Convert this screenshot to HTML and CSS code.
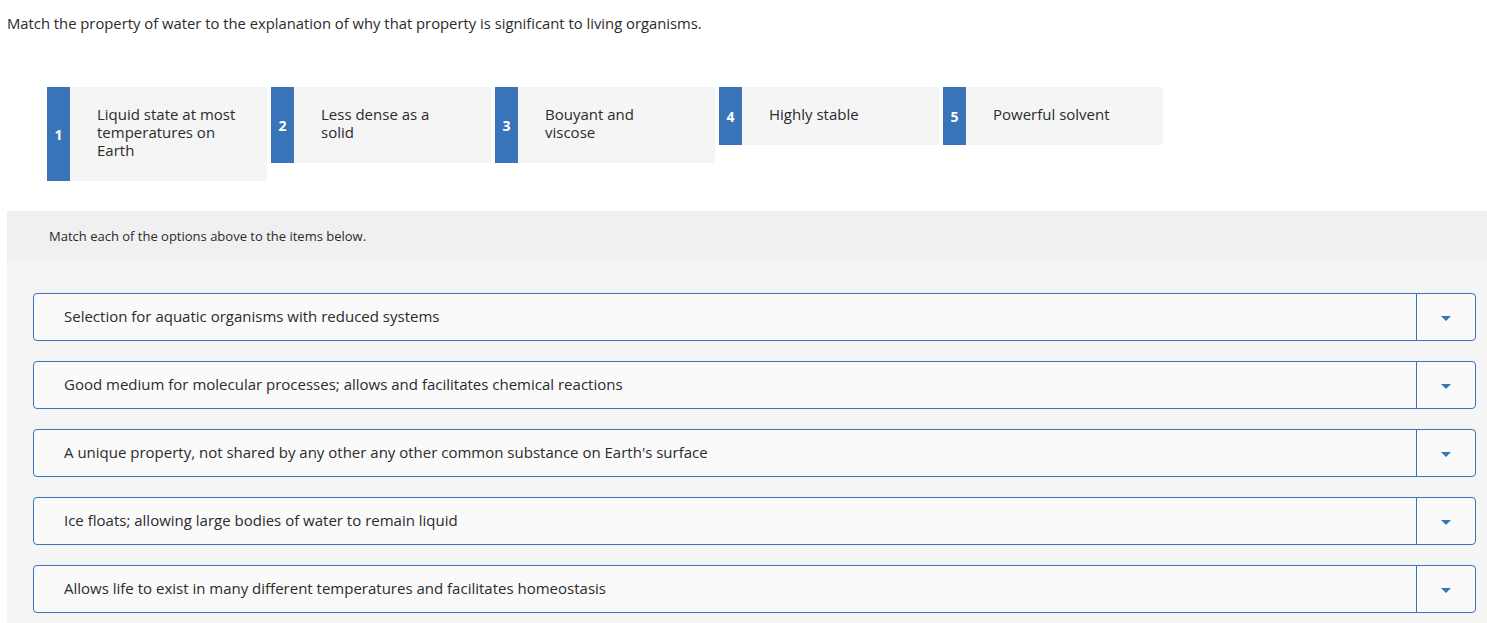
FILE: index.html
```html
<!DOCTYPE html>
<html lang="en">

<head>
    <meta charset="UTF-8" />
    <title>Matching</title>
    <link rel="stylesheet" href="styles.css">
</head>

<body>

    <p class="prompt">Match the property of water to the explanation of why that property is significant to living organisms.</p>

    <div class="choices">
        <div class="choice"><span class="num">1</span><span class="label">Liquid state at most temperatures on Earth</span></div>
        <div class="choice"><span class="num">2</span><span class="label">Less dense as a solid</span></div>
        <div class="choice"><span class="num">3</span><span class="label">Bouyant and viscose</span></div>
        <div class="choice"><span class="num">4</span><span class="label">Highly stable</span></div>
        <div class="choice"><span class="num">5</span><span class="label">Powerful solvent</span></div>
    </div>

    <div class="panel">
        <div class="panel-head">Match each of the options above to the items below.</div>
        <div class="rows">
            <div class="row"><span class="row-text">Selection for aquatic organisms with reduced systems</span><span class="drop"><span class="caret"></span></span></div>
            <div class="row"><span class="row-text">Good medium for molecular processes; allows and facilitates chemical reactions</span><span class="drop"><span class="caret"></span></span></div>
            <div class="row"><span class="row-text">A unique property, not shared by any other any other common substance on Earth's surface</span><span class="drop"><span class="caret"></span></span></div>
            <div class="row"><span class="row-text">Ice floats; allowing large bodies of water to remain liquid</span><span class="drop"><span class="caret"></span></span></div>
            <div class="row"><span class="row-text">Allows life to exist in many different temperatures and facilitates homeostasis</span><span class="drop"><span class="caret"></span></span></div>
        </div>
    </div>

</body>

</html>
```

FILE: styles.css
```css
:root {
    --blue: #3a74b8;
    --text: #2b2b2b;
}

* {
    box-sizing: border-box;
}

body {
    font-family: "Open Sans", Lato, sans-serif;
    margin: 0;
    color: var(--text);
    background: #fff;
}

.prompt {
    margin: 0;
    padding: 14px 7px 0;
    font-size: 14.8px;
    line-height: 18px;
}

.choices {
    display: flex;
    align-items: flex-start;
    gap: 4px;
    padding: 55px 0 0 47px;
}

.choice {
    display: flex;
    width: 220px;
    background: #f5f5f5;
    border-radius: 0 3px 3px 0;
}

.num {
    width: 23px;
    flex-shrink: 0;
    background: var(--blue);
    color: #fff;
    font-weight: bold;
    font-size: 14px;
    display: flex;
    align-items: center;
    justify-content: center;
}

.label {
    flex: 1;
    padding: 18px 28px 22px 27px;
    font-size: 15px;
    line-height: 18px;
}

.panel {
    margin: 30px 0 0 7px;
    background: #f5f5f5;
}

.panel-head {
    background: #f0f0f0;
    height: 50px;
    padding: 0 0 1px 42px;
    display: flex;
    align-items: center;
    font-size: 13px;
}

.rows {
    display: flex;
    flex-direction: column;
    gap: 20px;
    padding: 32px 11px 20px 26px;
}

.row {
    display: flex;
    height: 48px;
    border: 1px solid var(--blue);
    border-radius: 4px;
    background: #fafafa;
}

.row-text {
    flex: 1;
    display: flex;
    align-items: center;
    padding: 0 0 3px 30px;
    font-size: 15px;
}

.drop {
    width: 59px;
    border-left: 1px solid var(--blue);
    display: flex;
    align-items: center;
    justify-content: center;
}

.caret {
    width: 0;
    height: 0;
    margin-top: 3px;
    border-left: 5px solid transparent;
    border-right: 5px solid transparent;
    border-top: 5px solid var(--blue);
}
```
